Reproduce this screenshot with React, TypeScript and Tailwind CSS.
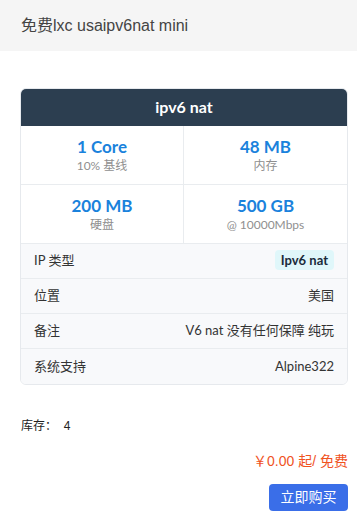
import React from "react";

const card = 'Lato, "Noto Sans CJK SC", sans-serif';
const arial = '"Liberation Sans", Arial, "Noto Sans CJK SC", sans-serif';

function Stat({ value, label, right }: { value: string; label: string; right?: boolean }) {
  return (
    <div className={`flex flex-col items-center justify-center h-[58px] ${right ? "" : "border-r border-[#e9ecef]"}`}>
      <div className="text-[17px] leading-[20px] font-bold text-[#1a82dc]">{value}</div>
      <div className="text-[12px] leading-[16px] text-[#8f8f8f] mt-[1px]">{label}</div>
    </div>
  );
}

function Row({ label, children, last }: { label: string; children: React.ReactNode; last?: boolean }) {
  return (
    <div className={`flex items-center justify-between h-[35px] px-[13px] ${last ? "" : "border-b border-[#e9ecef]"}`}>
      <span className="text-[13px] text-[#333]">{label}</span>
      <span className="text-[13px] text-[#333]">{children}</span>
    </div>
  );
}

export default function App() {
  return (
    <div className="w-[357px] h-[526px] bg-white" style={{ fontFamily: card }}>
      <div className="h-[51px] bg-[#f5f5f5] flex items-center px-[21px]">
        <span className="text-[16px] text-[#444]" style={{ fontFamily: arial }}>免费lxc usaipv6nat mini</span>
      </div>
      <div className="pl-[20px] pr-[9px] pt-[37px]">
        <div className="rounded-[6px] border border-[#e6e9ed] overflow-hidden">
          <div className="h-[38px] bg-[#2c3e50] flex items-center justify-center -mx-px -mt-px">
            <span className="text-white font-bold text-[16px]">ipv6 nat</span>
          </div>
          <div className="grid grid-cols-2 border-b border-[#e9ecef]">
            <Stat value="1 Core" label="10% 基线" />
            <Stat value="48 MB" label="内存" right />
          </div>
          <div className="grid grid-cols-2 border-b border-[#e9ecef]">
            <Stat value="200 MB" label="硬盘" />
            <Stat value="500 GB" label="@ 10000Mbps" right />
          </div>
          <div className="bg-[#f8f9fb]">
            <Row label="IP 类型">
              <span className="bg-[#e0f7fa] rounded-[4px] px-[6px] py-[2px] font-bold text-[#1a2a3a]">Ipv6 nat</span>
            </Row>
            <Row label="位置">美国</Row>
            <Row label="备注">V6 nat 没有任何保障 纯玩</Row>
            <Row label="系统支持" last>Alpine322</Row>
          </div>
        </div>
      </div>
      <div className="px-[21px] pt-[32px] text-[12px] text-[#222]" style={{ fontFamily: arial }}>
        库存：&nbsp;&nbsp;4
      </div>
      <div className="px-[9px] pt-[16px] flex justify-end">
        <span className="text-[14px] text-[#f0531f]" style={{ fontFamily: arial }}>￥0.00 起/ 免费</span>
      </div>
      <div className="px-[9px] pt-[12px] flex justify-end">
        <button className="w-[79px] h-[27px] rounded-[4px] bg-[#3a6ee8] text-white text-[14px]" style={{ fontFamily: arial }}>立即购买</button>
      </div>
    </div>
  );
}
